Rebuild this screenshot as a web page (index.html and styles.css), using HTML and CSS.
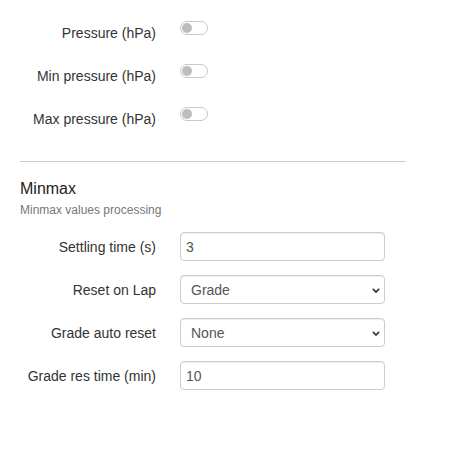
FILE: index.html
```html
<!DOCTYPE html>
<html lang="en">
<head>
<meta charset="utf-8">
<title>Settings</title>
<link rel="stylesheet" href="styles.css">
</head>
<body>
<div class="page">
  <div class="row">
    <label class="lbl">Pressure (hPa)</label>
    <span class="switch"><span class="knob"></span></span>
  </div>
  <div class="row">
    <label class="lbl">Min pressure (hPa)</label>
    <span class="switch"><span class="knob"></span></span>
  </div>
  <div class="row">
    <label class="lbl">Max pressure (hPa)</label>
    <span class="switch"><span class="knob"></span></span>
  </div>

  <hr class="sep">

  <h3 class="sec-title">Minmax</h3>
  <p class="sec-desc">Minmax values processing</p>

  <div class="row">
    <label class="lbl">Settling time (s)</label>
    <input class="ctrl" type="text" value="3">
  </div>
  <div class="row">
    <label class="lbl">Reset on Lap</label>
    <div class="select-wrap">
      <select class="ctrl sel"><option>Grade</option></select>
      <svg class="chev" viewBox="0 0 8 5" width="8" height="5"><path d="M0.9 0.9 L4 4 L7.1 0.9" fill="none" stroke="#333" stroke-width="1.7"/></svg>
    </div>
  </div>
  <div class="row">
    <label class="lbl">Grade auto reset</label>
    <div class="select-wrap">
      <select class="ctrl sel"><option>None</option></select>
      <svg class="chev" viewBox="0 0 8 5" width="8" height="5"><path d="M0.9 0.9 L4 4 L7.1 0.9" fill="none" stroke="#333" stroke-width="1.7"/></svg>
    </div>
  </div>
  <div class="row">
    <label class="lbl">Grade res time (min)</label>
    <input class="ctrl" type="text" value="10">
  </div>
</div>
</body>
</html>
```
FILE: styles.css
```css
html, body {
  margin: 0;
  padding: 0;
  background: #fff;
}
body {
  font-family: "Liberation Sans", Arial, sans-serif;
  font-size: 14px;
  color: #333;
}
.page {
  padding: 18px 0 0 20px;
  width: 386px;
}
.row {
  display: flex;
  align-items: center;
  gap: 24px;
  height: 29px;
  margin-bottom: 14px;
}
.lbl {
  flex: none;
  width: 136px;
  text-align: right;
  line-height: 20px;
}
.switch {
  align-self: flex-start;
  margin-top: 3px;
  width: 28px;
  height: 14px;
  box-sizing: border-box;
  border: 1px solid #c8c8c8;
  border-radius: 7px;
  padding: 1px;
  display: flex;
  align-items: center;
  background: #fff;
}
.knob {
  width: 10px;
  height: 10px;
  border-radius: 50%;
  background: #bdbdbd;
}
.sep {
  border: 0;
  border-top: 1px solid #cccccc;
  height: 0;
  margin: 28px 0 16.5px 0;
}
.sec-title {
  margin: 0 0 3px 0;
  font-size: 16px;
  font-weight: normal;
  line-height: 20px;
  color: #222;
}
.sec-desc {
  margin: 0 0 14.5px 0;
  font-size: 12px;
  line-height: 16px;
  color: #777;
}
.ctrl {
  width: 205px;
  height: 29px;
  box-sizing: border-box;
  border: 1px solid #ccc;
  border-radius: 4px;
  box-shadow: inset 0 1px 1px rgba(0, 0, 0, 0.075);
  padding: 0 5px;
  margin: 0;
  font-family: "Liberation Sans", Arial, sans-serif;
  font-size: 14px;
  color: #555;
  background: #fff;
  outline: none;
}
.select-wrap {
  position: relative;
  width: 205px;
  height: 29px;
}
.sel {
  appearance: none;
  -webkit-appearance: none;
  padding-left: 10px;
  display: block;
}
.chev {
  position: absolute;
  right: 5px;
  top: 13px;
  display: block;
}
```
